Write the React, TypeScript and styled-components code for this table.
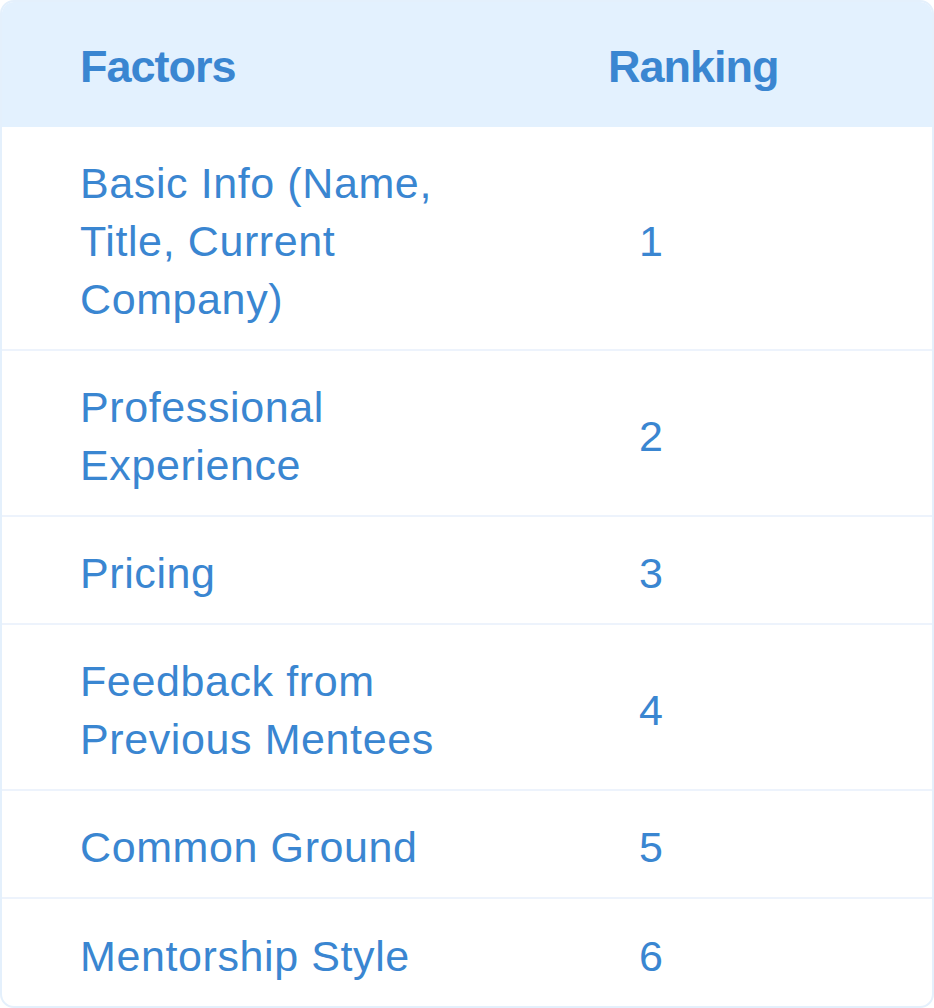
import React from 'react';
import styled, { createGlobalStyle } from 'styled-components';

const GlobalStyle = createGlobalStyle`
  html, body {
    margin: 0;
    padding: 0;
    background: #ffffff;
  }
  body {
    font-family: "Liberation Sans", Arial, sans-serif;
  }
`;

const TEXT_BLUE = '#3a86d1';

const Table = styled.div`
  width: 934px;
  height: 1008px;
  box-sizing: border-box;
  border: 2px solid #e4f0fc;
  border-radius: 14px;
  overflow: hidden;
  background: #ffffff;
  display: flex;
  flex-direction: column;
`;

const HeaderRow = styled.div`
  display: grid;
  grid-template-columns: 606px 1fr;
  align-items: center;
  box-sizing: border-box;
  height: 125px;
  padding-top: 4px;
  background: #e3f1fe;
`;

const HeaderCell = styled.div<{ $first?: boolean }>`
  font-size: 45px;
  font-weight: 700;
  letter-spacing: -1px;
  line-height: 58px;
  color: ${TEXT_BLUE};
  padding-left: ${p => (p.$first ? '78px' : '0')};
`;

const Row = styled.div<{ $last?: boolean }>`
  display: grid;
  grid-template-columns: 606px 1fr;
  align-items: center;
  padding: 27px 0 21px;
  border-bottom: ${p => (p.$last ? 'none' : '2px solid #edf3fc')};
  flex: ${p => (p.$last ? '1' : 'none')};
`;

const FactorCell = styled.div`
  padding-left: 78px;
  padding-right: 140px;
  font-size: 43px;
  letter-spacing: 0.6px;
  line-height: 58px;
  color: ${TEXT_BLUE};
`;

const RankCell = styled.div`
  padding-left: 31px;
  font-size: 43px;
  line-height: 58px;
  color: ${TEXT_BLUE};
`;

const factors: { name: string; rank: number }[] = [
  { name: 'Basic Info (Name, Title, Current Company)', rank: 1 },
  { name: 'Professional Experience', rank: 2 },
  { name: 'Pricing', rank: 3 },
  { name: 'Feedback from Previous Mentees', rank: 4 },
  { name: 'Common Ground', rank: 5 },
  { name: 'Mentorship Style', rank: 6 },
];

const App = (): JSX.Element => {
  return (
    <>
      <GlobalStyle />
      <Table>
        <HeaderRow>
          <HeaderCell $first>Factors</HeaderCell>
          <HeaderCell>Ranking</HeaderCell>
        </HeaderRow>
        {factors.map((f, i) => (
          <Row key={f.name} $last={i === factors.length - 1}>
            <FactorCell>{f.name}</FactorCell>
            <RankCell>{f.rank}</RankCell>
          </Row>
        ))}
      </Table>
    </>
  );
};

export default App;
